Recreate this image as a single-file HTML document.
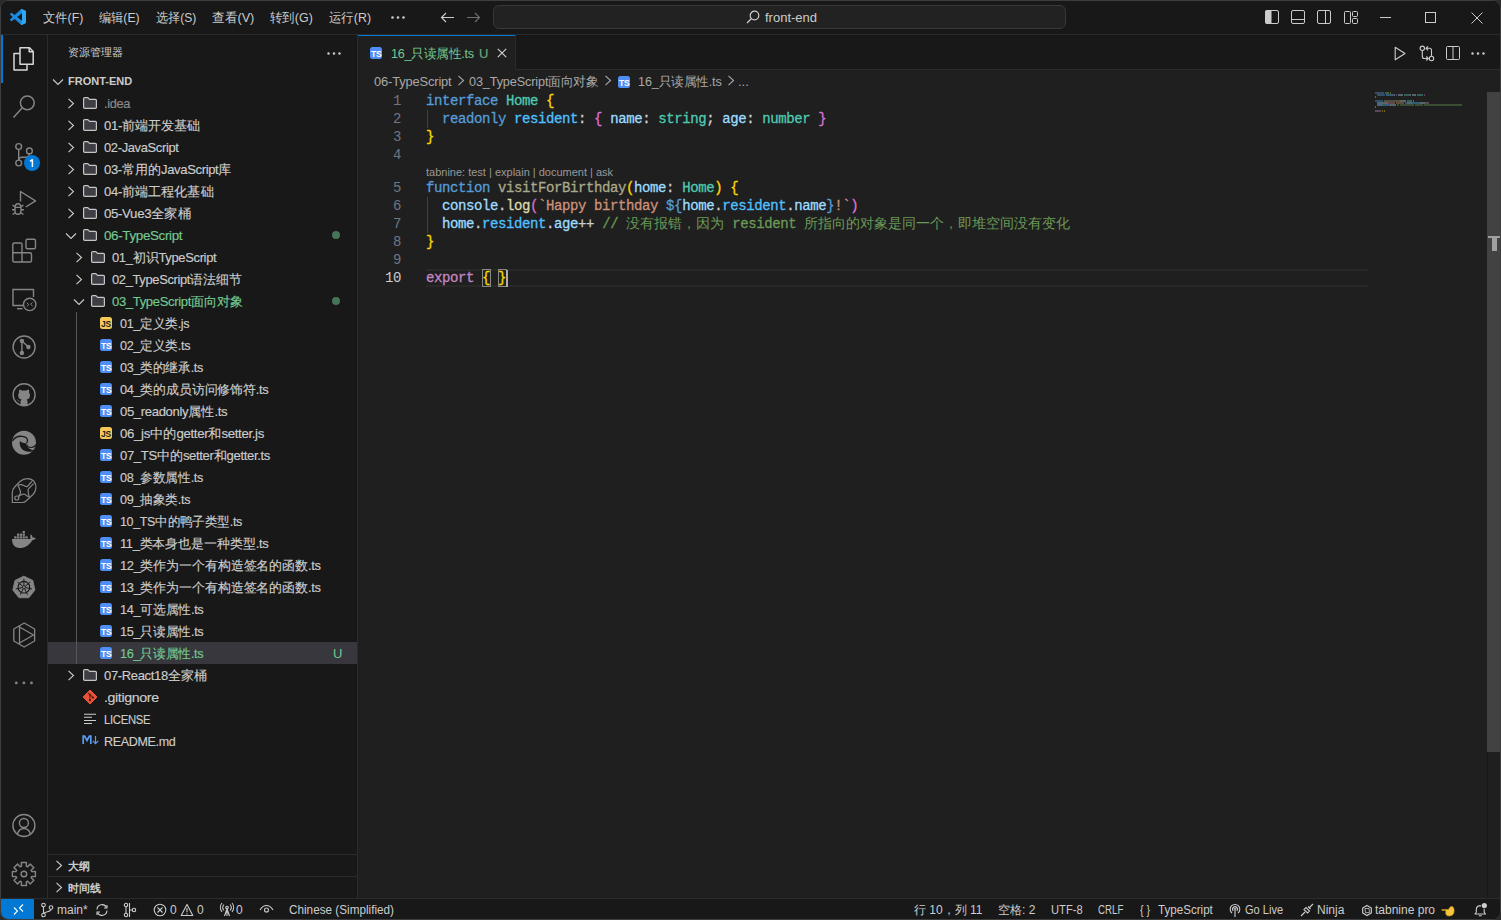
<!DOCTYPE html>
<html><head><meta charset="utf-8">
<style>
*{box-sizing:border-box;margin:0;padding:0}
html,body{width:1501px;height:920px;overflow:hidden;background:#2a2a2a}
body{font-family:"Liberation Sans",sans-serif;font-size:13px;color:#cccccc;position:relative}
.a{position:absolute}
#win{position:absolute;left:0;top:0;width:1501px;height:920px;background:#181818;border:1px solid #3d3d3d;border-radius:8px;overflow:hidden}
.t{white-space:nowrap;position:absolute;line-height:1}
svg{position:absolute;overflow:visible}
.menu{color:#cccccc;font-size:13px}
.ln{left:370px;width:30px;text-align:right;font-family:"Liberation Mono",monospace;font-size:14px;line-height:18px;letter-spacing:-0.4px}
.code{-webkit-text-stroke:0.3px;white-space:pre;left:425px;font-family:"Liberation Mono",monospace;font-size:14px;line-height:18px;letter-spacing:-0.4px;color:#cccccc}
.cj{letter-spacing:0;-webkit-text-stroke:0}
.sb{top:903px;font-size:12px;color:#cccccc}
.l{letter-spacing:-0.35px}
.sbt{-webkit-text-stroke:0.15px}
.mono{font-family:"Liberation Mono",monospace}
</style></head>
<body>
<div id="win">
  <!-- TITLE BAR -->
  <div class="a" id="title" style="left:0;top:0;width:1501px;height:34px;background:#181818"></div>
  <div class="a" style="left:0;top:33px;width:1501px;height:1px;background:#2b2b2b"></div>
  
  <!-- logo -->
  <svg style="left:9px;top:8px" width="16" height="16" viewBox="0 0 100 100"><defs><linearGradient id="vg" x1="0" y1="0" x2="1" y2="0"><stop offset="0" stop-color="#1177cc"/><stop offset="1" stop-color="#2aa3f0"/></linearGradient></defs><path fill="#1a8ae0" d="M96.46 10.8L75.86 0.87C73.47-0.28 70.62 0.21 68.75 2.08L29.34 38.03 12.17 25.01C10.57 23.79 8.33 23.89 6.84 25.24L1.32 30.26C-0.49 31.91-0.5 34.76 1.31 36.42L16.2 50 1.31 63.58C-0.5 65.24-0.49 68.09 1.32 69.74L6.84 74.76C8.33 76.11 10.57 76.21 12.17 74.99L29.34 61.97 68.75 97.92C70.62 99.79 73.47 100.28 75.86 99.13L96.46 89.2C98.62 88.16 100 85.97 100 83.57V16.43C100 14.03 98.62 11.84 96.46 10.8ZM75.02 72.7L45.11 50 75.02 27.3V72.7Z"/><path fill="#33a6f2" d="M75.86 0.87C73.47-0.28 70.62 0.21 68.75 2.08L75.02 27.3V72.7L68.75 97.92C70.62 99.79 73.47 100.28 75.86 99.13L96.46 89.2C98.62 88.16 100 85.97 100 83.57V16.43C100 14.03 98.62 11.84 96.46 10.8Z"/></svg>
  <div class="t menu" style="left:42px;top:10px;transform:scaleX(0.945);transform-origin:0 0">文件(F)</div>
  <div class="t menu" style="left:98px;top:10px;transform:scaleX(0.937);transform-origin:0 0">编辑(E)</div>
  <div class="t menu" style="left:155px;top:10px;transform:scaleX(0.93);transform-origin:0 0">选择(S)</div>
  <div class="t menu" style="left:211px;top:10px;transform:scaleX(0.977);transform-origin:0 0">查看(V)</div>
  <div class="t menu" style="left:269px;top:10px;transform:scaleX(0.956);transform-origin:0 0">转到(G)</div>
  <div class="t menu" style="left:328px;top:10px;transform:scaleX(0.955);transform-origin:0 0">运行(R)</div>
  <svg style="left:390px;top:15px" width="14" height="3"><circle cx="1.5" cy="1.5" r="1.3" fill="#ccc"/><circle cx="7" cy="1.5" r="1.3" fill="#ccc"/><circle cx="12.5" cy="1.5" r="1.3" fill="#ccc"/></svg>
  <svg style="left:439px;top:11px" width="15" height="11" viewBox="0 0 15 11"><path d="M14 5.5H1.5M6 1L1.5 5.5L6 10" stroke="#cccccc" stroke-width="1.1" fill="none"/></svg>
  <svg style="left:465px;top:11px" width="15" height="11" viewBox="0 0 15 11"><path d="M1 5.5H13.5M9 1L13.5 5.5L9 10" stroke="#6f6f6f" stroke-width="1.1" fill="none"/></svg>
  <div class="a" style="left:492px;top:4px;width:573px;height:24px;background:#222222;border:1px solid #383838;border-radius:6px"></div>
  <svg style="left:745px;top:9px" width="14" height="14" viewBox="0 0 14 14"><circle cx="8.5" cy="5.5" r="4.3" stroke="#cccccc" stroke-width="1.2" fill="none"/><path d="M5.5 8.5L1 13" stroke="#cccccc" stroke-width="1.3"/></svg>
  <div class="t" style="left:764px;top:10px;color:#cccccc">front-end</div>
  <!-- layout icons -->
  <svg style="left:1263px;top:8px" width="16" height="16" viewBox="0 0 16 16"><rect x="1.5" y="1.5" width="13" height="13" rx="1.5" stroke="#cccccc" fill="none"/><rect x="1.5" y="1.5" width="6" height="13" fill="#cccccc"/></svg>
  <svg style="left:1289px;top:8px" width="16" height="16" viewBox="0 0 16 16"><rect x="1.5" y="1.5" width="13" height="13" rx="1.5" stroke="#cccccc" fill="none"/><path d="M1.5 10.5H14.5" stroke="#cccccc"/></svg>
  <svg style="left:1315px;top:8px" width="16" height="16" viewBox="0 0 16 16"><rect x="1.5" y="1.5" width="13" height="13" rx="1.5" stroke="#cccccc" fill="none"/><path d="M9.5 1.5V14.5" stroke="#cccccc"/></svg>
  <svg style="left:1342px;top:8px" width="16" height="16" viewBox="0 0 16 16"><rect x="1.5" y="2.5" width="6" height="12" rx="1" stroke="#cccccc" fill="none"/><rect x="9.5" y="2.5" width="5" height="5" rx="1" stroke="#cccccc" fill="none"/><rect x="9.5" y="9.5" width="5" height="5" rx="1" stroke="#cccccc" fill="none"/></svg>
  <!-- window controls -->
  <div class="a" style="left:1379px;top:16px;width:11px;height:1px;background:#cccccc"></div>
  <div class="a" style="left:1424px;top:11px;width:11px;height:11px;border:1px solid #cccccc"></div>
  <svg style="left:1470px;top:11px" width="12" height="12" viewBox="0 0 12 12"><path d="M0.5 0.5L11.5 11.5M11.5 0.5L0.5 11.5" stroke="#cccccc" stroke-width="1"/></svg>

  <!-- ACTIVITY BAR -->
  <div class="a" style="left:46px;top:34px;width:1px;height:863px;background:#2b2b2b"></div>

  <div class="a" style="left:0;top:34px;width:2px;height:48px;background:#0078d4"></div>
  <!-- explorer -->
  <svg style="left:-1px;top:-1px" width="48" height="900" viewBox="0 0 48 900">
   <g fill="none" stroke="#d7d7d7" stroke-width="1.5" stroke-linejoin="round">
    <path d="M19.8 53.5H14V70H27V64.5"/>
    <path d="M20 47.8H29.5L33.2 51.5V64.2H20Z"/>
    <path d="M29.2 48V51.8H33"/>
   </g>
   <g fill="none" stroke="#858585" stroke-width="1.5">
    <circle cx="27.3" cy="102.8" r="6.9"/>
    <path d="M22.3 107.8L13.5 117.5"/>
   </g>
   <!-- scm -->
   <g fill="none" stroke="#858585" stroke-width="1.4">
    <circle cx="18.7" cy="146.5" r="2.9"/>
    <circle cx="29.4" cy="150.9" r="2.9"/>
    <circle cx="18.7" cy="163" r="2.9"/>
    <path d="M18.7 149.4V160.1"/>
    <path d="M29.4 153.8C29.4 156.3 27.8 157.2 25.5 157.2H22C20 157.2 18.7 158.2 18.7 160"/>
   </g>
   <circle cx="32" cy="163" r="8" fill="#0078d4"/>
   <path d="M32.4 159.3V167M30 161.3L32.6 159.4" stroke="#fff" stroke-width="1.5" fill="none"/>
   <!-- debug -->
   <g fill="none" stroke="#858585" stroke-width="1.4" stroke-linejoin="round">
    <path d="M20.5 201.5V191.5L35.5 200.8L25.8 207"/>
    <path d="M15 208C15 205 16.5 203.8 18 203.8 19.5 203.8 21 205 21 208V211C21 213 19.7 214.3 18 214.3 16.3 214.3 15 213 15 211Z"/><path d="M15 207.4H21M12.6 205.2L15 206.6M12 209.8H15M12.6 214.5L15 212.8M23.4 205.2L21 206.6M24 209.8H21M23.4 214.5L21 212.8"/>
   </g>
   <!-- extensions -->
   <g fill="none" stroke="#858585" stroke-width="1.4">
    <path d="M12.8 244.5a1.5 1.5 0 0 1 1.5-1.5H20.5a1.5 1.5 0 0 1 1.5 1.5V252.8H30a1.5 1.5 0 0 1 1.5 1.5V260.5a1.5 1.5 0 0 1-1.5 1.5H14.3a1.5 1.5 0 0 1-1.5-1.5Z"/>
    <path d="M12.8 252.8H22V262"/>
    <rect x="26" y="239.3" width="9.5" height="9.5" rx="1.5"/>
   </g>
   <!-- remote -->
   <g fill="none" stroke="#858585" stroke-width="1.4">
    <path d="M23 305.5H13V289.5H33.5V297"/>
    <path d="M17 308.7H22.5"/>
    <circle cx="29.7" cy="304.4" r="6.2"/>
    <path d="M26.8 302.8L28.8 304.6L26.8 306.4M32.6 302.4L30.6 304.2L32.6 306" stroke-width="1"/>
   </g>
   <!-- gitlens graph -->
   <g stroke="#858585" stroke-width="1.4" fill="none">
    <circle cx="24.1" cy="347" r="11"/>
    <path d="M21.9 341V353M21.9 341L28.4 347"/>
   </g>
   <g fill="#858585"><circle cx="21.9" cy="340.9" r="2.2"/><circle cx="28.4" cy="347" r="2.2"/><circle cx="21.9" cy="353" r="2.2"/></g>
   <!-- github -->
   <circle cx="24.1" cy="394.8" r="11" stroke="#858585" stroke-width="1.4" fill="none"/>
   <path fill="#858585" d="M20.5 405.5V401.5C18 401.5 17.8 400 16.8 399.5 17.5 399.4 18.3 399.8 19 400.8 19.6 401.5 20.3 401.3 20.8 401 21 400 21.3 399.6 21.6 399.4 19 399 18.2 397.5 18.2 395.2 18.2 394.2 18.6 393.3 19.2 392.6 19 392 18.9 390.8 19.4 389.5 20.5 389.5 21.6 390.3 22 390.7 23.3 390.4 24.9 390.4 26.2 390.7 26.6 390.3 27.7 389.5 28.8 389.5 29.3 390.8 29.2 392 29 392.6 29.6 393.3 30 394.2 30 395.2 30 397.5 29.2 399 26.6 399.4 27.2 399.9 27.6 400.6 27.6 401.6V405.5Z"/>
   <!-- edge -->
   <circle cx="24" cy="442.8" r="12" fill="#858585"/>
   <path d="M12.5 441C14.5 437.5 18.5 436 22 436.3 25.5 436.6 27.5 438.5 27.5 440.5 27.5 442 26.8 442.8 26.5 443.2" stroke="#181818" stroke-width="1.3" fill="none"/>
   <path d="M26.5 443.2C24 443.5 21 442.5 20 441 19 444.5 20.5 448.5 24 450.5 27.5 452.3 31.5 452 34.5 450.5 32 450 28.5 449 27 446.5 26.3 445.3 26.3 444 26.5 443.2Z" fill="#181818"/>
   <path d="M36 444.5C35 446.5 33 447.5 31 447.5 28.5 447.5 27 446 26.8 444.5" stroke="#181818" stroke-width="1.2" fill="none"/>
   <!-- thunder client-ish -->
   <g fill="none" stroke="#858585" stroke-width="1.2" stroke-linejoin="round">
    <path d="M12.3 502.5V492.5C12.3 490 13.5 488 15.5 486L20 481.5C24.5 477.5 31 478 34 481.5 37 485 36.5 491 33 494.5L26 501C25 502 24 502.5 22.5 502.5Z"/>
    <circle cx="16.8" cy="498" r="2"/>
    <path d="M17.8 485.3C19.3 487.5 19.8 489.5 20.5 491.5 21 493 20.3 494 18.6 496.3"/>
    <path d="M18.6 496.3C20.5 495 22.5 493.8 24.2 494.2 25.8 494.6 27 496.3 29.2 497"/>
    <path d="M17.8 485.3C20 484.3 22 484.5 23.8 485.5 25 486.2 26 486.8 27.2 486.6L31.8 481.5"/>
    <path d="M28.2 489.2L33.6 483.6M28.2 489.2C27.6 491.5 28.6 494.5 29.2 497"/>
   </g>
   <!-- docker -->
   <path fill="#858585" d="M12 539H30.5C30.2 537.5 30.3 535.5 30.8 534.2 32 535.2 32.5 536.5 32.6 537.6 33.8 537.3 35 537.8 35.8 538.3 35 539.5 33.8 540.1 32.2 540.2 30 544.5 25.5 548 19.5 548 14.5 548 12 544.5 12 539Z"/>
   <g fill="#858585"><rect x="14.2" y="536.3" width="2.3" height="2.2"/><rect x="17" y="536.3" width="2.3" height="2.2"/><rect x="19.8" y="536.3" width="2.3" height="2.2"/><rect x="22.6" y="536.3" width="2.3" height="2.2"/><rect x="25.4" y="536.3" width="2.3" height="2.2"/><rect x="17" y="533.6" width="2.3" height="2.2"/><rect x="19.8" y="533.6" width="2.3" height="2.2"/><rect x="22.6" y="533.6" width="2.3" height="2.2"/><rect x="22.6" y="530.9" width="2.3" height="2.2"/></g>
   <!-- kubernetes -->
   <path fill="#858585" d="M23.90 576.10L32.81 580.39L35.01 590.04L28.85 597.77L18.95 597.77L12.79 590.04L14.99 580.39Z" stroke="#858585" stroke-width="0.8" stroke-linejoin="round"/>
   <g fill="none" stroke="#181818">
    <circle cx="23.9" cy="587.2" r="5.8" stroke-width="1.2"/>
    <circle cx="23.9" cy="587.2" r="1.6" stroke-width="0.9"/>
    <path d="M23.90 585.40L23.90 578.90M25.31 586.08L30.39 582.03M25.65 587.60L31.99 589.05M24.68 588.82L27.50 594.68M23.12 588.82L20.30 594.68M22.15 587.60L15.81 589.05M22.49 586.08L17.41 582.03" stroke-width="1"/>
   </g>
   <!-- hex play -->
   <g fill="none" stroke="#858585" stroke-width="1.3" stroke-linejoin="round">
    <path d="M24.2 623L34.6 629V641L24.2 647L13.8 641V629Z"/>
    <path d="M19.5 626V644M19.5 627L33.5 635L19.5 643"/>
   </g>
   <g fill="#858585"><circle cx="16.3" cy="682.9" r="1.4"/><circle cx="23.9" cy="682.9" r="1.4"/><circle cx="31.5" cy="682.9" r="1.4"/></g>
   <!-- accounts -->
   <g fill="none" stroke="#858585" stroke-width="1.4">
    <circle cx="23.9" cy="825.5" r="11"/>
    <circle cx="23.9" cy="823" r="4.5"/>
    <path d="M17.2 834.3C18.5 830.5 21 828.5 23.9 828.5 26.8 828.5 29.3 830.5 30.6 834.3"/>
   </g>
   <!-- gear -->
   <g fill="none" stroke="#858585" stroke-width="1.4" stroke-linejoin="round">
    <path d="M21.48 866.17 L21.32 862.48 L26.48 862.48 L26.32 866.17 L27.73 866.75 L30.22 864.04 L33.86 867.68 L31.15 870.17 L31.73 871.58 L35.42 871.42 L35.42 876.58 L31.73 876.42 L31.15 877.83 L33.86 880.32 L30.22 883.96 L27.73 881.25 L26.32 881.83 L26.48 885.52 L21.32 885.52 L21.48 881.83 L20.07 881.25 L17.58 883.96 L13.94 880.32 L16.65 877.83 L16.07 876.42 L12.38 876.58 L12.38 871.42 L16.07 871.58 L16.65 870.17 L13.94 867.68 L17.58 864.04 L20.07 866.75Z"/>
    <circle cx="23.9" cy="874" r="2.8"/>
   </g>
  </svg>

  <!-- SIDEBAR -->
  <div class="t" style="left:67px;top:46px;font-size:11px;color:#cccccc">资源管理器</div>
  <svg style="left:326px;top:51px" width="14" height="3"><circle cx="1.5" cy="1.5" r="1.2" fill="#ccc"/><circle cx="7" cy="1.5" r="1.2" fill="#ccc"/><circle cx="12.5" cy="1.5" r="1.2" fill="#ccc"/></svg>
  <svg style="left:51px;top:77px" width="12" height="8" viewBox="0 0 12 8"><path d="M1 1.5L6 6.5L11 1.5" stroke="#cccccc" stroke-width="1.1" fill="none"/></svg>
  <div class="t" style="left:67px;top:75px;font-size:11px;font-weight:bold;color:#cccccc">FRONT-END</div>
  <div class="a" style="left:47px;top:641px;width:309px;height:22px;background:#37373d"></div>
  <div class="a" style="left:75px;top:311px;width:1px;height:352px;background:#585858"></div>
  <svg style="left:66px;top:97px" width="8" height="11" viewBox="0 0 8 11"><path d="M1.5 0.8L6.5 5.5L1.5 10.2" stroke="#cccccc" stroke-width="1.1" fill="none"/></svg>
  <svg style="left:82px;top:96px" width="14" height="12" viewBox="0 0 15 13" preserveAspectRatio="none"><path d="M0.65 1.8A1.15 1.15 0 0 1 1.8 0.65H5.2L7 2.6H13.2A1.15 1.15 0 0 1 14.35 3.75V11.2A1.15 1.15 0 0 1 13.2 12.35H1.8A1.15 1.15 0 0 1 0.65 11.2Z" fill="#3e3e44" stroke="#c5c5c5" stroke-width="1.3" stroke-linejoin="round"/></svg>
  <div class="t sbt" style="left:103px;top:96px;color:#8c8c8c;transform:scaleX(0.985);transform-origin:0 0"><span class="l">.idea</span></div>
  <svg style="left:66px;top:119px" width="8" height="11" viewBox="0 0 8 11"><path d="M1.5 0.8L6.5 5.5L1.5 10.2" stroke="#cccccc" stroke-width="1.1" fill="none"/></svg>
  <svg style="left:82px;top:118px" width="14" height="12" viewBox="0 0 15 13" preserveAspectRatio="none"><path d="M0.65 1.8A1.15 1.15 0 0 1 1.8 0.65H5.2L7 2.6H13.2A1.15 1.15 0 0 1 14.35 3.75V11.2A1.15 1.15 0 0 1 13.2 12.35H1.8A1.15 1.15 0 0 1 0.65 11.2Z" fill="#3e3e44" stroke="#c5c5c5" stroke-width="1.3" stroke-linejoin="round"/></svg>
  <div class="t sbt" style="left:103px;top:118px;color:#cccccc;transform:scaleX(1.009);transform-origin:0 0"><span class="l">01-</span>前端开发基础</div>
  <svg style="left:66px;top:141px" width="8" height="11" viewBox="0 0 8 11"><path d="M1.5 0.8L6.5 5.5L1.5 10.2" stroke="#cccccc" stroke-width="1.1" fill="none"/></svg>
  <svg style="left:82px;top:140px" width="14" height="12" viewBox="0 0 15 13" preserveAspectRatio="none"><path d="M0.65 1.8A1.15 1.15 0 0 1 1.8 0.65H5.2L7 2.6H13.2A1.15 1.15 0 0 1 14.35 3.75V11.2A1.15 1.15 0 0 1 13.2 12.35H1.8A1.15 1.15 0 0 1 0.65 11.2Z" fill="#3e3e44" stroke="#c5c5c5" stroke-width="1.3" stroke-linejoin="round"/></svg>
  <div class="t sbt" style="left:103px;top:140px;color:#cccccc;transform:scaleX(0.995);transform-origin:0 0"><span class="l">02-JavaScript</span></div>
  <svg style="left:66px;top:163px" width="8" height="11" viewBox="0 0 8 11"><path d="M1.5 0.8L6.5 5.5L1.5 10.2" stroke="#cccccc" stroke-width="1.1" fill="none"/></svg>
  <svg style="left:82px;top:162px" width="14" height="12" viewBox="0 0 15 13" preserveAspectRatio="none"><path d="M0.65 1.8A1.15 1.15 0 0 1 1.8 0.65H5.2L7 2.6H13.2A1.15 1.15 0 0 1 14.35 3.75V11.2A1.15 1.15 0 0 1 13.2 12.35H1.8A1.15 1.15 0 0 1 0.65 11.2Z" fill="#3e3e44" stroke="#c5c5c5" stroke-width="1.3" stroke-linejoin="round"/></svg>
  <div class="t sbt" style="left:103px;top:162px;color:#cccccc;transform:scaleX(1.004);transform-origin:0 0"><span class="l">03-</span>常用的<span class="l">JavaScript</span>库</div>
  <svg style="left:66px;top:185px" width="8" height="11" viewBox="0 0 8 11"><path d="M1.5 0.8L6.5 5.5L1.5 10.2" stroke="#cccccc" stroke-width="1.1" fill="none"/></svg>
  <svg style="left:82px;top:184px" width="14" height="12" viewBox="0 0 15 13" preserveAspectRatio="none"><path d="M0.65 1.8A1.15 1.15 0 0 1 1.8 0.65H5.2L7 2.6H13.2A1.15 1.15 0 0 1 14.35 3.75V11.2A1.15 1.15 0 0 1 13.2 12.35H1.8A1.15 1.15 0 0 1 0.65 11.2Z" fill="#3e3e44" stroke="#c5c5c5" stroke-width="1.3" stroke-linejoin="round"/></svg>
  <div class="t sbt" style="left:103px;top:184px;color:#cccccc;transform:scaleX(1.009);transform-origin:0 0"><span class="l">04-</span>前端工程化基础</div>
  <svg style="left:66px;top:207px" width="8" height="11" viewBox="0 0 8 11"><path d="M1.5 0.8L6.5 5.5L1.5 10.2" stroke="#cccccc" stroke-width="1.1" fill="none"/></svg>
  <svg style="left:82px;top:206px" width="14" height="12" viewBox="0 0 15 13" preserveAspectRatio="none"><path d="M0.65 1.8A1.15 1.15 0 0 1 1.8 0.65H5.2L7 2.6H13.2A1.15 1.15 0 0 1 14.35 3.75V11.2A1.15 1.15 0 0 1 13.2 12.35H1.8A1.15 1.15 0 0 1 0.65 11.2Z" fill="#3e3e44" stroke="#c5c5c5" stroke-width="1.3" stroke-linejoin="round"/></svg>
  <div class="t sbt" style="left:103px;top:206px;color:#cccccc;transform:scaleX(1.021);transform-origin:0 0"><span class="l">05-Vue3</span>全家桶</div>
  <svg style="left:64px;top:231px" width="12" height="8" viewBox="0 0 12 8"><path d="M1 1.5L6 6.5L11 1.5" stroke="#cccccc" stroke-width="1.1" fill="none"/></svg>
  <svg style="left:82px;top:228px" width="14" height="12" viewBox="0 0 15 13" preserveAspectRatio="none"><path d="M0.65 1.8A1.15 1.15 0 0 1 1.8 0.65H5.2L7 2.6H13.2A1.15 1.15 0 0 1 14.35 3.75V11.2A1.15 1.15 0 0 1 13.2 12.35H1.8A1.15 1.15 0 0 1 0.65 11.2Z" fill="#3e3e44" stroke="#c5c5c5" stroke-width="1.3" stroke-linejoin="round"/></svg>
  <div class="t sbt" style="left:103px;top:228px;color:#73c991;transform:scaleX(1.033);transform-origin:0 0"><span class="l">06-TypeScript</span></div>
  <div class="a" style="left:331px;top:230px;width:8px;height:8px;border-radius:50%;background:#467558"></div>
  <svg style="left:74px;top:251px" width="8" height="11" viewBox="0 0 8 11"><path d="M1.5 0.8L6.5 5.5L1.5 10.2" stroke="#cccccc" stroke-width="1.1" fill="none"/></svg>
  <svg style="left:90px;top:250px" width="14" height="12" viewBox="0 0 15 13" preserveAspectRatio="none"><path d="M0.65 1.8A1.15 1.15 0 0 1 1.8 0.65H5.2L7 2.6H13.2A1.15 1.15 0 0 1 14.35 3.75V11.2A1.15 1.15 0 0 1 13.2 12.35H1.8A1.15 1.15 0 0 1 0.65 11.2Z" fill="#3e3e44" stroke="#c5c5c5" stroke-width="1.3" stroke-linejoin="round"/></svg>
  <div class="t sbt" style="left:111px;top:250px;color:#cccccc;transform:scaleX(0.997);transform-origin:0 0"><span class="l">01_</span>初识<span class="l">TypeScript</span></div>
  <svg style="left:74px;top:273px" width="8" height="11" viewBox="0 0 8 11"><path d="M1.5 0.8L6.5 5.5L1.5 10.2" stroke="#cccccc" stroke-width="1.1" fill="none"/></svg>
  <svg style="left:90px;top:272px" width="14" height="12" viewBox="0 0 15 13" preserveAspectRatio="none"><path d="M0.65 1.8A1.15 1.15 0 0 1 1.8 0.65H5.2L7 2.6H13.2A1.15 1.15 0 0 1 14.35 3.75V11.2A1.15 1.15 0 0 1 13.2 12.35H1.8A1.15 1.15 0 0 1 0.65 11.2Z" fill="#3e3e44" stroke="#c5c5c5" stroke-width="1.3" stroke-linejoin="round"/></svg>
  <div class="t sbt" style="left:111px;top:272px;color:#cccccc;transform:scaleX(0.994);transform-origin:0 0"><span class="l">02_TypeScript</span>语法细节</div>
  <svg style="left:72px;top:297px" width="12" height="8" viewBox="0 0 12 8"><path d="M1 1.5L6 6.5L11 1.5" stroke="#cccccc" stroke-width="1.1" fill="none"/></svg>
  <svg style="left:90px;top:294px" width="14" height="12" viewBox="0 0 15 13" preserveAspectRatio="none"><path d="M0.65 1.8A1.15 1.15 0 0 1 1.8 0.65H5.2L7 2.6H13.2A1.15 1.15 0 0 1 14.35 3.75V11.2A1.15 1.15 0 0 1 13.2 12.35H1.8A1.15 1.15 0 0 1 0.65 11.2Z" fill="#3e3e44" stroke="#c5c5c5" stroke-width="1.3" stroke-linejoin="round"/></svg>
  <div class="t sbt" style="left:111px;top:294px;color:#73c991;transform:scaleX(1.005);transform-origin:0 0"><span class="l">03_TypeScript</span>面向对象</div>
  <div class="a" style="left:331px;top:296px;width:8px;height:8px;border-radius:50%;background:#467558"></div>
  <div class="a" style="left:99px;top:316px;width:12px;height:12px;border-radius:2.5px;background:#f6c85a"><span class="t" style="left:1px;top:3px;font-size:8.5px;font-weight:bold;color:#1e1e1e;letter-spacing:-0.3px">JS</span></div>
  <div class="t sbt" style="left:119px;top:316px;color:#cccccc;transform:scaleX(0.967);transform-origin:0 0"><span class="l">01_</span>定义类<span class="l">.js</span></div>
  <div class="a" style="left:99px;top:338px;width:12px;height:12px;border-radius:2.5px;background:#4f8ef7"><span class="t" style="left:1px;top:3px;font-size:8.5px;font-weight:bold;color:#ffffff;letter-spacing:-0.3px">TS</span></div>
  <div class="t sbt" style="left:119px;top:338px;color:#cccccc;transform:scaleX(0.97);transform-origin:0 0"><span class="l">02_</span>定义类<span class="l">.ts</span></div>
  <div class="a" style="left:99px;top:360px;width:12px;height:12px;border-radius:2.5px;background:#4f8ef7"><span class="t" style="left:1px;top:3px;font-size:8.5px;font-weight:bold;color:#ffffff;letter-spacing:-0.3px">TS</span></div>
  <div class="t sbt" style="left:119px;top:360px;color:#cccccc;transform:scaleX(0.973);transform-origin:0 0"><span class="l">03_</span>类的继承<span class="l">.ts</span></div>
  <div class="a" style="left:99px;top:382px;width:12px;height:12px;border-radius:2.5px;background:#4f8ef7"><span class="t" style="left:1px;top:3px;font-size:8.5px;font-weight:bold;color:#ffffff;letter-spacing:-0.3px">TS</span></div>
  <div class="t sbt" style="left:119px;top:382px;color:#cccccc;transform:scaleX(0.987);transform-origin:0 0"><span class="l">04_</span>类的成员访问修饰符<span class="l">.ts</span></div>
  <div class="a" style="left:99px;top:404px;width:12px;height:12px;border-radius:2.5px;background:#4f8ef7"><span class="t" style="left:1px;top:3px;font-size:8.5px;font-weight:bold;color:#ffffff;letter-spacing:-0.3px">TS</span></div>
  <div class="t sbt" style="left:119px;top:404px;color:#cccccc;transform:scaleX(1.008);transform-origin:0 0"><span class="l">05_readonly</span>属性<span class="l">.ts</span></div>
  <div class="a" style="left:99px;top:426px;width:12px;height:12px;border-radius:2.5px;background:#f6c85a"><span class="t" style="left:1px;top:3px;font-size:8.5px;font-weight:bold;color:#1e1e1e;letter-spacing:-0.3px">JS</span></div>
  <div class="t sbt" style="left:119px;top:426px;color:#cccccc;transform:scaleX(1.02);transform-origin:0 0"><span class="l">06_js</span>中的<span class="l">getter</span>和<span class="l">setter.js</span></div>
  <div class="a" style="left:99px;top:448px;width:12px;height:12px;border-radius:2.5px;background:#4f8ef7"><span class="t" style="left:1px;top:3px;font-size:8.5px;font-weight:bold;color:#ffffff;letter-spacing:-0.3px">TS</span></div>
  <div class="t sbt" style="left:119px;top:448px;color:#cccccc;transform:scaleX(1.006);transform-origin:0 0"><span class="l">07_TS</span>中的<span class="l">setter</span>和<span class="l">getter.ts</span></div>
  <div class="a" style="left:99px;top:470px;width:12px;height:12px;border-radius:2.5px;background:#4f8ef7"><span class="t" style="left:1px;top:3px;font-size:8.5px;font-weight:bold;color:#ffffff;letter-spacing:-0.3px">TS</span></div>
  <div class="t sbt" style="left:119px;top:470px;color:#cccccc;transform:scaleX(0.973);transform-origin:0 0"><span class="l">08_</span>参数属性<span class="l">.ts</span></div>
  <div class="a" style="left:99px;top:492px;width:12px;height:12px;border-radius:2.5px;background:#4f8ef7"><span class="t" style="left:1px;top:3px;font-size:8.5px;font-weight:bold;color:#ffffff;letter-spacing:-0.3px">TS</span></div>
  <div class="t sbt" style="left:119px;top:492px;color:#cccccc;transform:scaleX(0.97);transform-origin:0 0"><span class="l">09_</span>抽象类<span class="l">.ts</span></div>
  <div class="a" style="left:99px;top:514px;width:12px;height:12px;border-radius:2.5px;background:#4f8ef7"><span class="t" style="left:1px;top:3px;font-size:8.5px;font-weight:bold;color:#ffffff;letter-spacing:-0.3px">TS</span></div>
  <div class="t sbt" style="left:119px;top:514px;color:#cccccc;transform:scaleX(0.959);transform-origin:0 0"><span class="l">10_TS</span>中的鸭子类型<span class="l">.ts</span></div>
  <div class="a" style="left:99px;top:536px;width:12px;height:12px;border-radius:2.5px;background:#4f8ef7"><span class="t" style="left:1px;top:3px;font-size:8.5px;font-weight:bold;color:#ffffff;letter-spacing:-0.3px">TS</span></div>
  <div class="t sbt" style="left:119px;top:536px;color:#cccccc;transform:scaleX(0.993);transform-origin:0 0"><span class="l">11_</span>类本身也是一种类型<span class="l">.ts</span></div>
  <div class="a" style="left:99px;top:558px;width:12px;height:12px;border-radius:2.5px;background:#4f8ef7"><span class="t" style="left:1px;top:3px;font-size:8.5px;font-weight:bold;color:#ffffff;letter-spacing:-0.3px">TS</span></div>
  <div class="t sbt" style="left:119px;top:558px;color:#cccccc;transform:scaleX(0.991);transform-origin:0 0"><span class="l">12_</span>类作为一个有构造签名的函数<span class="l">.ts</span></div>
  <div class="a" style="left:99px;top:580px;width:12px;height:12px;border-radius:2.5px;background:#4f8ef7"><span class="t" style="left:1px;top:3px;font-size:8.5px;font-weight:bold;color:#ffffff;letter-spacing:-0.3px">TS</span></div>
  <div class="t sbt" style="left:119px;top:580px;color:#cccccc;transform:scaleX(0.991);transform-origin:0 0"><span class="l">13_</span>类作为一个有构造签名的函数<span class="l">.ts</span></div>
  <div class="a" style="left:99px;top:602px;width:12px;height:12px;border-radius:2.5px;background:#4f8ef7"><span class="t" style="left:1px;top:3px;font-size:8.5px;font-weight:bold;color:#ffffff;letter-spacing:-0.3px">TS</span></div>
  <div class="t sbt" style="left:119px;top:602px;color:#cccccc;transform:scaleX(0.977);transform-origin:0 0"><span class="l">14_</span>可选属性<span class="l">.ts</span></div>
  <div class="a" style="left:99px;top:624px;width:12px;height:12px;border-radius:2.5px;background:#4f8ef7"><span class="t" style="left:1px;top:3px;font-size:8.5px;font-weight:bold;color:#ffffff;letter-spacing:-0.3px">TS</span></div>
  <div class="t sbt" style="left:119px;top:624px;color:#cccccc;transform:scaleX(0.977);transform-origin:0 0"><span class="l">15_</span>只读属性<span class="l">.ts</span></div>
  <div class="a" style="left:99px;top:646px;width:12px;height:12px;border-radius:2.5px;background:#4f8ef7"><span class="t" style="left:1px;top:3px;font-size:8.5px;font-weight:bold;color:#ffffff;letter-spacing:-0.3px">TS</span></div>
  <div class="t sbt" style="left:119px;top:646px;color:#73c991;transform:scaleX(0.976);transform-origin:0 0"><span class="l">16_</span>只读属性<span class="l">.ts</span></div>
  <div class="t" style="left:332px;top:646px;color:#73c991">U</div>
  <svg style="left:66px;top:669px" width="8" height="11" viewBox="0 0 8 11"><path d="M1.5 0.8L6.5 5.5L1.5 10.2" stroke="#cccccc" stroke-width="1.1" fill="none"/></svg>
  <svg style="left:82px;top:668px" width="14" height="12" viewBox="0 0 15 13" preserveAspectRatio="none"><path d="M0.65 1.8A1.15 1.15 0 0 1 1.8 0.65H5.2L7 2.6H13.2A1.15 1.15 0 0 1 14.35 3.75V11.2A1.15 1.15 0 0 1 13.2 12.35H1.8A1.15 1.15 0 0 1 0.65 11.2Z" fill="#3e3e44" stroke="#c5c5c5" stroke-width="1.3" stroke-linejoin="round"/></svg>
  <div class="t sbt" style="left:103px;top:668px;color:#cccccc;transform:scaleX(1.001);transform-origin:0 0"><span class="l">07-React18</span>全家桶</div>
  <svg style="left:81px;top:688px" width="16" height="16" viewBox="0 0 16 16"><path d="M8 1L15 8L8 15L1 8Z" fill="#e8513a" stroke="#e8513a" stroke-width="1" stroke-linejoin="round"/><path d="M6 3.8L8 5.8V11.2M8 5.8L11 8.6" stroke="#7a2414" stroke-width="1.2" fill="none"/><circle cx="8" cy="11.2" r="1.1" fill="#5a1a0c"/><circle cx="11" cy="8.6" r="1.1" fill="#5a1a0c"/><circle cx="8" cy="5.8" r="1.1" fill="#5a1a0c"/></svg>
  <div class="t sbt" style="left:103px;top:690px;color:#cccccc;transform:scaleX(1.094);transform-origin:0 0"><span class="l">.gitignore</span></div>
  <svg style="left:82px;top:712px" width="14" height="12" viewBox="0 0 14 12"><path d="M1 1.3H13M1 4.3H9M1 7.5H13M1 10.5H9" stroke="#cccccc" stroke-width="1.1"/></svg>
  <div class="t sbt" style="left:103px;top:712px;color:#cccccc;transform:scaleX(0.869);transform-origin:0 0"><span class="l">LICENSE</span></div>
  <svg style="left:81px;top:734px" width="18" height="10" viewBox="0 0 18 10"><path d="M1.2 9V1.2H2.6L5 5.5 7.4 1.2H8.8V9" stroke="#5a9cf5" stroke-width="1.7" fill="none" stroke-linejoin="miter"/><path d="M13.5 1V8.5M10.8 5.8L13.5 8.6 16.2 5.8" stroke="#5a9cf5" stroke-width="1.2" fill="none"/></svg>
  <div class="t sbt" style="left:103px;top:734px;color:#cccccc;transform:scaleX(0.964);transform-origin:0 0"><span class="l">README.md</span></div>
  <div class="a" style="left:47px;top:853px;width:309px;height:1px;background:#2b2b2b"></div>
  <div class="a" style="left:47px;top:875px;width:309px;height:1px;background:#2b2b2b"></div>
  <svg style="left:54px;top:859px" width="8" height="11" viewBox="0 0 8 11"><path d="M1.5 0.8L6.5 5.5L1.5 10.2" stroke="#cccccc" stroke-width="1.1" fill="none"/></svg>
  <div class="t" style="left:67px;top:860px;font-size:11px;font-weight:bold;color:#cccccc">大纲</div>
  <svg style="left:54px;top:881px" width="8" height="11" viewBox="0 0 8 11"><path d="M1.5 0.8L6.5 5.5L1.5 10.2" stroke="#cccccc" stroke-width="1.1" fill="none"/></svg>
  <div class="t" style="left:67px;top:882px;font-size:11px;font-weight:bold;color:#cccccc">时间线</div>
  <!-- SIDEBAR border -->
  <div class="a" style="left:356px;top:34px;width:1px;height:863px;background:#2b2b2b"></div>
  <!-- EDITOR -->
  <div class="a" id="editor" style="left:357px;top:34px;width:1144px;height:863px;background:#1f1f1f"></div>
  <!-- EDITOR CONTENT -->
  <div class="a" style="left:357px;top:34px;width:158px;height:35px;background:#1f1f1f;border-top:1px solid #0078d4"></div>
  <div class="a" style="left:514px;top:34px;width:1px;height:35px;background:#2b2b2b"></div>
  <div class="a" style="left:515px;top:34px;width:986px;height:35px;background:#181818;border-bottom:1px solid #2b2b2b"></div>
  <div class="a" style="left:369px;top:46px;width:12px;height:12px;border-radius:2.5px;background:#4f8ef7"><span class="t" style="left:1px;top:3px;font-size:8.5px;font-weight:bold;color:#fff;letter-spacing:-0.3px">TS</span></div>
  <div class="t" style="left:390px;top:46px;color:#73c991;letter-spacing:-0.25px;transform:scaleX(0.976);transform-origin:0 0">16_只读属性.ts</div>
  <div class="t" style="left:478px;top:46px;color:#62a77a;-webkit-text-stroke:0.2px">U</div>
  <svg style="left:496px;top:47px" width="10" height="10" viewBox="0 0 10 10"><path d="M0.8 0.8L9.2 9.2M9.2 0.8L0.8 9.2" stroke="#cccccc" stroke-width="1.2"/></svg>
  <svg style="left:1393px;top:45px" width="12" height="15" viewBox="0 0 12 15"><path d="M1.2 1.2L11 7.5L1.2 13.8Z" stroke="#cccccc" stroke-width="1.1" fill="none" stroke-linejoin="round"/></svg>
  <svg style="left:1418px;top:44px" width="16" height="17" viewBox="0 0 16 17"><g stroke="#cccccc" stroke-width="1.1" fill="none"><circle cx="3.3" cy="3.3" r="2.2"/><circle cx="12.5" cy="13.5" r="2.2"/><path d="M3.3 5.5V11.5Q3.3 13.5 5.3 13.5H9M7.3 11.5L9.3 13.5L7.3 15.5"/><path d="M12.5 11.3V5.3Q12.5 3.3 10.5 3.3H7M9 1.3L7 3.3L9 5.3"/></g></svg>
  <svg style="left:1445px;top:45px" width="15" height="15" viewBox="0 0 15 15"><rect x="0.5" y="0.5" width="13" height="13" rx="1" stroke="#cccccc" stroke-width="1" fill="none"/><path d="M7 0.5V13.5" stroke="#cccccc" stroke-width="1"/></svg>
  <svg style="left:1470px;top:51px" width="14" height="3"><circle cx="1.5" cy="1.5" r="1.2" fill="#ccc"/><circle cx="7" cy="1.5" r="1.2" fill="#ccc"/><circle cx="12.5" cy="1.5" r="1.2" fill="#ccc"/></svg>
  <div class="t" style="left:373px;top:74px;color:#a9a9a9;letter-spacing:-0.15px;transform:scaleX(0.991);transform-origin:0 0">06-TypeScript</div>
  <svg style="left:456px;top:74px" width="8" height="11" viewBox="0 0 8 11"><path d="M1.5 0.8L6.5 5.5L1.5 10.2" stroke="#a9a9a9" stroke-width="1.1" fill="none"/></svg>
  <div class="t" style="left:468px;top:74px;color:#a9a9a9;letter-spacing:-0.15px;transform:scaleX(0.977);transform-origin:0 0">03_TypeScript面向对象</div>
  <svg style="left:603px;top:74px" width="8" height="11" viewBox="0 0 8 11"><path d="M1.5 0.8L6.5 5.5L1.5 10.2" stroke="#a9a9a9" stroke-width="1.1" fill="none"/></svg>
  <div class="a" style="left:617px;top:75px;width:12px;height:12px;border-radius:2.5px;background:#4f8ef7"><span class="t" style="left:1px;top:3px;font-size:8.5px;font-weight:bold;color:#fff;letter-spacing:-0.3px">TS</span></div>
  <div class="t" style="left:637px;top:74px;color:#a9a9a9;letter-spacing:-0.15px;transform:scaleX(0.973);transform-origin:0 0">16_只读属性.ts</div>
  <svg style="left:726px;top:74px" width="8" height="11" viewBox="0 0 8 11"><path d="M1.5 0.8L6.5 5.5L1.5 10.2" stroke="#a9a9a9" stroke-width="1.1" fill="none"/></svg>
  <div class="t" style="left:737px;top:74px;color:#a9a9a9">...</div>
  <div class="a" style="left:425px;top:268px;width:942px;height:18px;border-top:2px solid #282828;border-bottom:2px solid #282828"></div>
  <div class="a" style="left:481px;top:268px;width:9px;height:18px;border:1px solid #888888;background:rgba(0,100,0,0.1)"></div>
  <div class="a" style="left:497px;top:268px;width:9px;height:18px;border:1px solid #888888;background:rgba(0,100,0,0.1)"></div>
  <div class="a" style="left:505px;top:269px;width:2px;height:17px;background:#aeafad"></div>
  <div class="a" style="left:426px;top:109px;width:1px;height:18px;background:#404040"></div>
  <div class="a" style="left:426px;top:196px;width:1px;height:36px;background:#404040"></div>
  <div class="t ln" style="top:91px;color:#6e7681">1</div>
  <div class="t code" style="top:91px"><span style="color:#569cd6">interface</span> <span style="color:#4ec9b0">Home</span> <span style="color:#ffd700">{</span></div>
  <div class="t ln" style="top:109px;color:#6e7681">2</div>
  <div class="t code" style="top:109px">  <span style="color:#569cd6">readonly</span> <span style="color:#4fc1ff">resident</span><span style="color:#cccccc">:</span> <span style="color:#da70d6">{</span> <span style="color:#9cdcfe">name</span><span style="color:#cccccc">:</span> <span style="color:#4ec9b0">string</span><span style="color:#cccccc">;</span> <span style="color:#9cdcfe">age</span><span style="color:#cccccc">:</span> <span style="color:#4ec9b0">number</span> <span style="color:#da70d6">}</span></div>
  <div class="t ln" style="top:127px;color:#6e7681">3</div>
  <div class="t code" style="top:127px"><span style="color:#ffd700">}</span></div>
  <div class="t ln" style="top:145px;color:#6e7681">4</div>
  <div class="t ln" style="top:178px;color:#6e7681">5</div>
  <div class="t code" style="top:178px"><span style="color:#569cd6">function</span> <span style="color:#aaa98a">visitForBirthday</span><span style="color:#ffd700">(</span><span style="color:#9cdcfe">home</span><span style="color:#cccccc">:</span> <span style="color:#4ec9b0">Home</span><span style="color:#ffd700">)</span> <span style="color:#ffd700">{</span></div>
  <div class="t ln" style="top:196px;color:#6e7681">6</div>
  <div class="t code" style="top:196px">  <span style="color:#9cdcfe">console</span><span style="color:#cccccc">.</span><span style="color:#dcdcaa">log</span><span style="color:#da70d6">(</span><span style="color:#ce9178">`Happy birthday </span><span style="color:#569cd6">${</span><span style="color:#9cdcfe">home</span><span style="color:#cccccc">.</span><span style="color:#4fc1ff">resident</span><span style="color:#cccccc">.</span><span style="color:#9cdcfe">name</span><span style="color:#569cd6">}</span><span style="color:#ce9178">!`</span><span style="color:#da70d6">)</span></div>
  <div class="t ln" style="top:214px;color:#6e7681">7</div>
  <div class="t code" style="top:214px">  <span style="color:#9cdcfe">home</span><span style="color:#cccccc">.</span><span style="color:#4fc1ff">resident</span><span style="color:#cccccc">.</span><span style="color:#9cdcfe">age</span><span style="color:#cccccc">++</span> <span style="color:#6a9955">// </span><span class="cj" style="color:#6a9955">没有报错，因为</span><span style="color:#6a9955"> resident </span><span class="cj" style="color:#6a9955">所指向的对象是同一个，即堆空间没有变化</span></div>
  <div class="t ln" style="top:232px;color:#6e7681">8</div>
  <div class="t code" style="top:232px"><span style="color:#ffd700">}</span></div>
  <div class="t ln" style="top:250px;color:#6e7681">9</div>
  <div class="t ln" style="top:268px;color:#cccccc">10</div>
  <div class="t code" style="top:268px"><span style="color:#c586c0">export</span> <span style="color:#ffd700">{</span> <span style="color:#ffd700">}</span></div>
  <div class="t" style="left:425px;top:166px;font-size:11px;color:#999999">tabnine: test | explain | document | ask</div>
  <div class="a" style="left:1486px;top:91px;width:14px;height:660px;background:#424242"></div>
  <div class="a" style="left:1486px;top:751px;width:1px;height:146px;background:#181818"></div>
  <div class="a" style="left:1487px;top:235px;width:13px;height:2px;background:#a0a0a0"></div>
  <div class="a" style="left:1491px;top:237px;width:5px;height:13px;background:#a0a0a0"></div>
  <!-- minimap -->
  <svg style="left:1374px;top:91px" width="110" height="22" viewBox="0 0 110 22"><g opacity="0.38"><rect x="0" y="0" width="9" height="2" fill="#569cd6"/><rect x="10" y="0" width="4" height="2" fill="#4ec9b0"/><rect x="15" y="0" width="1" height="2" fill="#ffd700"/><rect x="2" y="2" width="8" height="2" fill="#569cd6"/><rect x="11" y="2" width="8" height="2" fill="#4fc1ff"/><rect x="19" y="2" width="1" height="2" fill="#cccccc"/><rect x="21" y="2" width="1" height="2" fill="#da70d6"/><rect x="23" y="2" width="4" height="2" fill="#9cdcfe"/><rect x="27" y="2" width="1" height="2" fill="#cccccc"/><rect x="29" y="2" width="6" height="2" fill="#4ec9b0"/><rect x="35" y="2" width="1" height="2" fill="#cccccc"/><rect x="37" y="2" width="3" height="2" fill="#9cdcfe"/><rect x="40" y="2" width="1" height="2" fill="#cccccc"/><rect x="42" y="2" width="6" height="2" fill="#4ec9b0"/><rect x="49" y="2" width="1" height="2" fill="#da70d6"/><rect x="0" y="4" width="1" height="2" fill="#ffd700"/><rect x="0" y="8" width="8" height="2" fill="#569cd6"/><rect x="9" y="8" width="16" height="2" fill="#9e9d80"/><rect x="25" y="8" width="1" height="2" fill="#ffd700"/><rect x="26" y="8" width="4" height="2" fill="#9cdcfe"/><rect x="30" y="8" width="1" height="2" fill="#cccccc"/><rect x="32" y="8" width="4" height="2" fill="#4ec9b0"/><rect x="36" y="8" width="1" height="2" fill="#ffd700"/><rect x="38" y="8" width="1" height="2" fill="#ffd700"/><rect x="2" y="10" width="7" height="2" fill="#9cdcfe"/><rect x="9" y="10" width="1" height="2" fill="#cccccc"/><rect x="10" y="10" width="3" height="2" fill="#dcdcaa"/><rect x="13" y="10" width="1" height="2" fill="#da70d6"/><rect x="14" y="10" width="6" height="2" fill="#ce9178"/><rect x="21" y="10" width="8" height="2" fill="#ce9178"/><rect x="30" y="10" width="2" height="2" fill="#569cd6"/><rect x="32" y="10" width="4" height="2" fill="#9cdcfe"/><rect x="36" y="10" width="1" height="2" fill="#cccccc"/><rect x="37" y="10" width="8" height="2" fill="#4fc1ff"/><rect x="45" y="10" width="1" height="2" fill="#cccccc"/><rect x="46" y="10" width="4" height="2" fill="#9cdcfe"/><rect x="50" y="10" width="1" height="2" fill="#569cd6"/><rect x="51" y="10" width="2" height="2" fill="#ce9178"/><rect x="53" y="10" width="1" height="2" fill="#da70d6"/><rect x="2" y="12" width="4" height="2" fill="#9cdcfe"/><rect x="6" y="12" width="1" height="2" fill="#cccccc"/><rect x="7" y="12" width="8" height="2" fill="#4fc1ff"/><rect x="15" y="12" width="1" height="2" fill="#cccccc"/><rect x="16" y="12" width="3" height="2" fill="#9cdcfe"/><rect x="19" y="12" width="2" height="2" fill="#cccccc"/><rect x="22" y="12" width="2" height="2" fill="#6a9955"/><rect x="25" y="12" width="14" height="2" fill="#6a9955"/><rect x="40" y="12" width="8" height="2" fill="#6a9955"/><rect x="49" y="12" width="38" height="2" fill="#6a9955"/><rect x="0" y="14" width="1" height="2" fill="#ffd700"/><rect x="0" y="18" width="6" height="2" fill="#c586c0"/><rect x="7" y="18" width="1" height="2" fill="#ffd700"/><rect x="9" y="18" width="1" height="2" fill="#ffd700"/></g></svg>
  <!-- STATUS BAR -->
  <div class="a" id="status" style="left:0;top:897px;width:1501px;height:23px;background:#181818;border-top:1px solid #2b2b2b"></div>
  <!-- STATUS CONTENT -->
  <div class="a" style="left:0;top:898px;width:33px;height:22px;background:#0078d4"></div>
  <svg style="left:12px;top:902px" width="11" height="14" viewBox="0 0 11 14"><path d="M1 4.5L4.5 8L1 11.5M10 1.5L6.5 5L10 8.5" stroke="#ffffff" stroke-width="1.1" fill="none"/></svg>
  <svg style="left:39px;top:901px" width="14" height="16" viewBox="0 0 14 16"><g stroke="#cccccc" stroke-width="1.1" fill="none"><circle cx="3.5" cy="3" r="1.8"/><circle cx="3.5" cy="13" r="1.8"/><circle cx="11" cy="5.5" r="1.8"/><path d="M3.5 4.8V11.2M11 7.3C11 9.5 8 9.5 5.5 10.5 4.5 11 3.8 11 3.5 11.2"/></g></svg>
  <div class="t sb" style="left:56px">main*</div>
  <svg style="left:94px;top:902px" width="14" height="14" viewBox="0 0 14 14"><g stroke="#cccccc" stroke-width="1.1" fill="none"><path d="M2 6.5A5 5 0 0 1 11.5 4.5M12 7.5A5 5 0 0 1 2.5 9.5"/><path d="M12 2V5H9M2 12V9H5"/></g></svg>
  <svg style="left:122px;top:901px" width="14" height="16" viewBox="0 0 14 16"><g stroke="#cccccc" stroke-width="1.1" fill="none"><circle cx="3" cy="3" r="1.7"/><circle cx="3" cy="13" r="1.7"/><circle cx="11" cy="8" r="1.7"/><path d="M3 4.7V11.3M6.5 1V15M9.3 8H6.5"/></g></svg>
  <svg style="left:152px;top:902px" width="14" height="14" viewBox="0 0 14 14"><g stroke="#cccccc" stroke-width="1.1" fill="none"><circle cx="7" cy="7" r="5.8"/><path d="M4.5 4.5L9.5 9.5M9.5 4.5L4.5 9.5"/></g></svg>
  <div class="t sb" style="left:169px">0</div>
  <svg style="left:179px;top:902px" width="14" height="14" viewBox="0 0 14 14"><g stroke="#cccccc" stroke-width="1.1" fill="none" stroke-linejoin="round"><path d="M7 1.5L12.8 12.5H1.2Z"/><path d="M7 5V9.3M7 10.5V11.5"/></g></svg>
  <div class="t sb" style="left:196px">0</div>
  <svg style="left:219px;top:901px" width="14" height="15" viewBox="0 0 14 15"><g stroke="#cccccc" stroke-width="1.1" fill="none"><circle cx="7" cy="5.5" r="1.3"/><path d="M7 7V14M4.5 14L7 7L9.5 14M4 2.5A4.5 4.5 0 0 0 4 8.5M10 2.5A4.5 4.5 0 0 1 10 8.5M2 1A7 7 0 0 0 2 10M12 1A7 7 0 0 1 12 10"/></g></svg>
  <div class="t sb" style="left:235px">0</div>
  <svg style="left:258px;top:903px" width="15" height="11" viewBox="0 0 15 11"><g stroke="#cccccc" stroke-width="1.1" fill="none"><path d="M1 6C3 2.5 5 1.5 7.5 1.5 10 1.5 12 2.5 14 6"/><circle cx="7.5" cy="6" r="2"/></g></svg>
  <div class="t sb" style="left:288px;transform:scaleX(0.978);transform-origin:0 0">Chinese (Simplified)</div>
  <div class="t sb" style="left:913px">行 10，列 11</div>
  <div class="t sb" style="left:997px">空格: 2</div>
  <div class="t sb" style="left:1050px;transform:scaleX(0.93);transform-origin:0 0">UTF-8</div>
  <div class="t sb" style="left:1097px;transform:scaleX(0.81);transform-origin:0 0">CRLF</div>
  <div class="t sb" style="left:1139px;transform:scaleX(0.88);transform-origin:0 0">{ }</div>
  <div class="t sb" style="left:1157px;transform:scaleX(0.967);transform-origin:0 0">TypeScript</div>
  <svg style="left:1228px;top:902px" width="12" height="15" viewBox="0 0 12 15"><g stroke="#cccccc" stroke-width="1.1" fill="none"><path d="M3 10A4.8 4.8 0 1 1 9 10"/><path d="M4.2 7.8A2.4 2.4 0 1 1 7.8 7.8"/><path d="M6 7V14"/></g><circle cx="6" cy="6" r="1" fill="#cccccc"/></svg>
  <div class="t sb" style="left:1244px;transform:scaleX(0.92);transform-origin:0 0">Go Live</div>
  <svg style="left:1299px;top:902px" width="14" height="14" viewBox="0 0 14 14"><g stroke="#cccccc" stroke-width="1.1" fill="none"><path d="M1 13L5 9M9 5L13 1"/><path d="M4 6.5L7.5 10L9.5 8L6 4.5Z"/><path d="M8 3.5L10.5 6"/></g></svg>
  <div class="t sb" style="left:1316px">Ninja</div>
  <svg style="left:1360px;top:903px" width="12" height="13" viewBox="0 0 12 13"><path d="M6 1.5L10.3 4V9L6 11.5L1.7 9V4Z" stroke="#cccccc" stroke-width="1.2" fill="none"/><path d="M4 4.5L8 4.5L8.5 8.5L4.5 8.8Z" stroke="#cccccc" stroke-width="0.8" fill="none"/></svg>
  <div class="t sb" style="left:1374px">tabnine pro</div>
  <svg style="left:1440px;top:903px" width="14" height="13" viewBox="0 0 14 13"><path d="M1 5.5H7.5C8.5 3.5 9.5 2 11 2.5 13 3 13.5 6 13 8.5 12.5 11 10.5 12 8 12 6 12 5 11 5 10 4.5 9.5 4.5 8.5 5 8 4.5 7.5 4.5 7 5 6.5H1.2C0.5 6.5 0.5 5.5 1 5.5Z" fill="#f4c63b" stroke="#c9901a" stroke-width="0.6"/></svg>
  <svg style="left:1472px;top:901px" width="15" height="16" viewBox="0 0 15 16"><g stroke="#cccccc" stroke-width="1.1" fill="none" stroke-linejoin="round"><path d="M2 12H12.5L11.2 10.2V7.8A4.2 4.2 0 0 0 7.2 3.6 4.2 4.2 0 0 0 3.3 7.8V10.2Z"/><path d="M5.8 13.8H8.8"/></g><circle cx="11.3" cy="3.6" r="3.5" fill="#181818"/><circle cx="11.3" cy="3.6" r="2.6" fill="#cccccc"/></svg>
</div>
</body></html>
